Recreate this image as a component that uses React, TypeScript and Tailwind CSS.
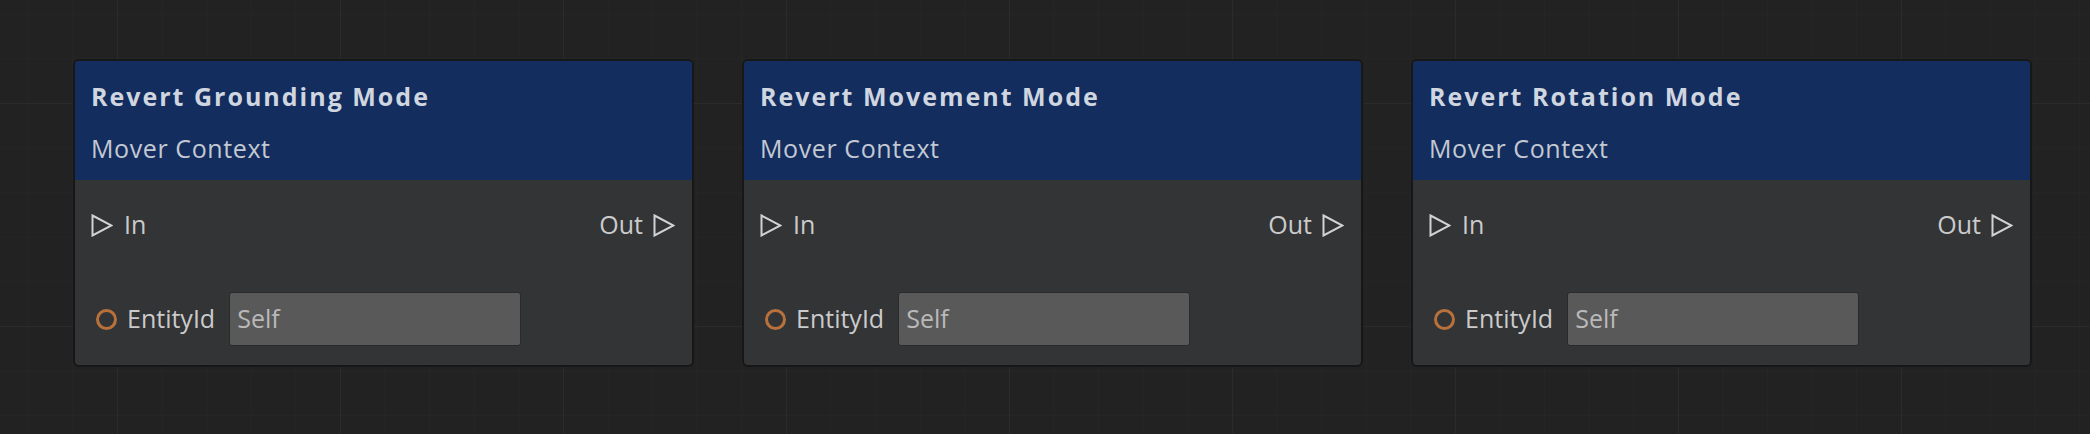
const nodes = [
  { title: "Revert Grounding Mode", category: "Mover Context" },
  { title: "Revert Movement Mode", category: "Mover Context" },
  { title: "Revert Rotation Mode", category: "Mover Context" },
];

function ExecPin() {
  return (
    <svg width="22" height="23" viewBox="0 0 22 23" className="shrink-0">
      <path
        d="M1.5 1.5 L20.5 11.5 L1.5 21.5 Z"
        fill="none"
        stroke="#d2d2d2"
        strokeWidth="2"
        strokeLinejoin="miter"
      />
    </svg>
  );
}

function DataPin() {
  return (
    <span className="block h-[21px] w-[21px] shrink-0 rounded-full border-[3px] border-[#b8713a]" />
  );
}

interface INodeCardProps {
  title: string;
  category: string;
}

function NodeCard({ title, category }: INodeCardProps) {
  return (
    <div className="flex h-[308px] w-[621px] shrink-0 flex-col overflow-hidden rounded-[6px] border-2 border-[#171717] bg-[#333436]">
      <div className="flex h-[119px] flex-col bg-[#132d5e] px-[16px] pt-[19px]">
        <p className="text-[25px] font-bold leading-[32px] tracking-[2px] text-[#cfd6e0]">
          {title}
        </p>
        <p className="mt-[20px] text-[25px] leading-[32px] tracking-[0.6px] text-[#c3c9d3]">
          {category}
        </p>
      </div>
      <div className="flex flex-1 flex-col pl-[16px] pr-[17px] pt-[29px]">
        <div className="flex h-[32px] items-center justify-between text-[25px] text-[#cbcbcb]">
          <div className="flex items-center gap-[11px]">
            <ExecPin />
            <span>In</span>
          </div>
          <div className="flex items-center gap-[10px]">
            <span>Out</span>
            <ExecPin />
          </div>
        </div>
        <div className="mt-[51px] flex items-center pl-[5px]">
          <DataPin />
          <span className="ml-[10px] text-[25px] text-[#cbcbcb]">EntityId</span>
          <div className="ml-[14px] flex h-[54px] w-[292px] items-center rounded-[3px] border border-[#2a2a2a] bg-[#595959] pl-[7px] text-[25px] text-[#b9b9b9]">
            Self
          </div>
        </div>
      </div>
    </div>
  );
}

export default function App() {
  return (
    <div className="flex h-[434px] w-full gap-[48px] overflow-hidden bg-[#222222] bg-[linear-gradient(to_right,#2b2b2b_1px,transparent_1px),linear-gradient(to_bottom,#2b2b2b_1px,transparent_1px),linear-gradient(to_right,#252525_1px,transparent_1px),linear-gradient(to_bottom,#252525_1px,transparent_1px)] bg-[size:223px_223px,223px_223px,44.6px_44.6px,44.6px_44.6px] bg-[position:117px_103px,117px_103px,117px_103px,117px_103px] pl-[73px] pt-[59px] font-['Open_Sans',sans-serif]">
      {nodes.map((n) => (
        <NodeCard key={n.title} title={n.title} category={n.category} />
      ))}
    </div>
  );
}
